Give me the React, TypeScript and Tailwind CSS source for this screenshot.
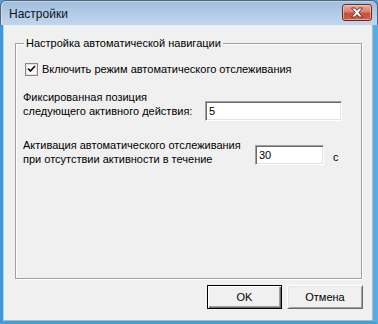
import React from "react";

function CloseButton() {
  return (
    <div className="w-[30px] h-[17px] rounded-[3px] border border-[#6b2620] bg-[linear-gradient(to_bottom,#e9ab9b_0%,#d98371_45%,#c65140_55%,#c9604c_100%)] shadow-[inset_0_0_0_1px_rgba(255,220,210,0.55)] flex items-center justify-center">
      <svg width="14" height="11" viewBox="0 0 14 11">
        <path
          d="M1.5 1 L5 1 L7 3.4 L9 1 L12.5 1 L8.8 5.5 L12.5 10 L9 10 L7 7.6 L5 10 L1.5 10 L5.2 5.5 Z"
          fill="#ffffff"
          stroke="#5a2a24"
          strokeWidth="0.9"
          strokeLinejoin="round"
        />
      </svg>
    </div>
  );
}

function TextBox({ value, className }: { value: string; className: string }) {
  return (
    <div
      className={
        "h-[20px] bg-white border border-t-[#a0a0a0] border-l-[#a0a0a0] border-b-white border-r-white shadow-[inset_1px_1px_0_#696969,inset_-1px_-1px_0_#e3e3e3] flex items-center pl-[3px] leading-[14px] " +
        className
      }
    >
      {value}
    </div>
  );
}

export default function App() {
  return (
    <div className="w-[378px] h-[324px] flex flex-col font-['Liberation_Sans',Arial,sans-serif] text-[11px] leading-[14px] text-black bg-[#4aa8e0]">
      {/* Title bar */}
      <div className="h-[25px] shrink-0 flex items-center justify-between pl-[8px] pr-[5px] rounded-t-[6px] border-t border-l border-r border-[#52657c] bg-[linear-gradient(to_bottom,#9fbcdc_0%,#b2cbe6_50%,#c0d6ed_100%)] shadow-[inset_1px_1px_0_rgba(255,255,255,0.35)]">
        <span className="text-[12px] text-[#0b1420] pt-[1px]">Настройки</span>
        <div className="mb-[1px]">
          <CloseButton />
        </div>
      </div>

      {/* Client area */}
      <div className="flex-1 flex flex-col bg-[#f0f0f0] border-l-[3px] border-r-[5px] border-b-[3px] border-l-[#3d98dc] border-r-[#52b0e6] border-b-[#34a6dc] shadow-[inset_1px_0_0_#b7d3ee,inset_-1px_-1px_0_#a9b9c9]">
        {/* Group box */}
        <div className="relative ml-[12px] mt-[18px] w-[347px] h-[236px] border border-[#a0a0a0] shadow-[inset_1px_1px_0_#ffffff,1px_1px_0_#ffffff]">
          <span className="absolute left-[8px] top-[-8px] px-[2px] bg-[#f0f0f0]">
            Настройка автоматической навигации
          </span>

          <div className="flex items-center ml-[9px] mt-[18px] gap-[4px]">
            <div className="w-[13px] h-[13px] bg-white border border-[#8a8a8a] shadow-[inset_0_0_0_1px_#e2e2e2] flex items-center justify-center">
              <svg width="9" height="8" viewBox="0 0 9 8">
                <path d="M1 3.5 L3.4 6 L8 1" fill="none" stroke="#111" strokeWidth="1.8" />
              </svg>
            </div>
            <span>Включить режим автоматического отслеживания</span>
          </div>

          <div className="flex items-start ml-[7px] mt-[14px]">
            <div className="w-[182px]">
              <div>Фиксированная позиция</div>
              <div>следующего активного действия:</div>
            </div>
            <TextBox value="5" className="w-[137px] mt-[11px]" />
          </div>

          <div className="flex items-start ml-[7px] mt-[17px]">
            <div className="w-[232px]">
              <div>Активация автоматического отслеживания</div>
              <div>при отсутствии активности в течение</div>
            </div>
            <TextBox value="30" className="w-[69px] mt-[7px]" />
            <span className="ml-[9px] mt-[12px]">с</span>
          </div>
        </div>

        {/* Buttons */}
        <div className="flex justify-end gap-[5px] mt-[6px] mr-[10px]">
          <button className="w-[75px] h-[24px] bg-[#f0f0f0] border border-black shadow-[inset_1px_1px_0_#ffffff,inset_-1px_-1px_0_#696969,inset_-2px_-2px_0_#a0a0a0] flex items-center justify-center">
            OK
          </button>
          <button className="w-[76px] h-[24px] bg-[#f0f0f0] border border-t-white border-l-white border-b-[#696969] border-r-[#696969] shadow-[inset_1px_1px_0_#e3e3e3,inset_-1px_-1px_0_#a0a0a0] flex items-center justify-center">
            Отмена
          </button>
        </div>
      </div>
    </div>
  );
}
